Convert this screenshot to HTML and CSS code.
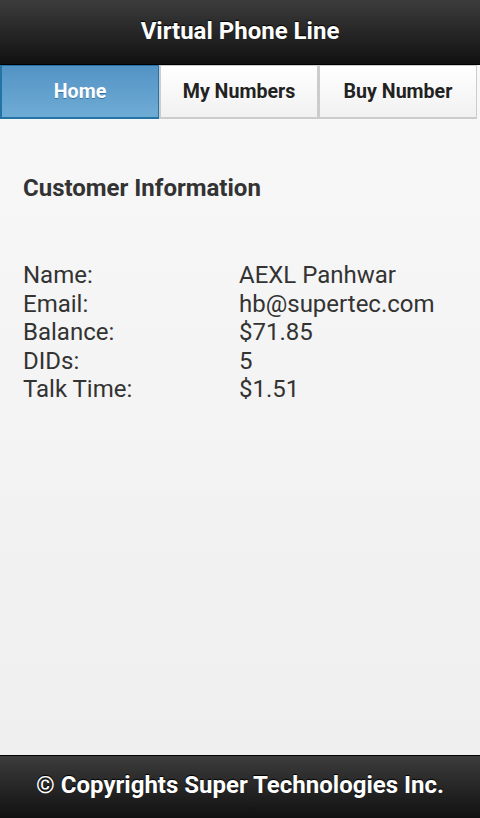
FILE: index.html
```html
<!DOCTYPE html>
<html>
<head>
<meta charset="utf-8">
<link rel="stylesheet" href="styles.css">
</head>
<body>
<div class="page">
  <header class="header"><h1 class="title">Virtual Phone Line</h1></header>
  <nav class="navbar">
    <a class="tab active">Home</a>
    <a class="tab">My Numbers</a>
    <a class="tab">Buy Number</a>
  </nav>
  <main class="content">
    <h3 class="section-title">Customer Information</h3>
    <table class="info">
      <tr><td class="label">Name:</td><td>AEXL Panhwar</td></tr>
      <tr><td class="label">Email:</td><td>hb@supertec.com</td></tr>
      <tr><td class="label">Balance:</td><td>$71.85</td></tr>
      <tr><td class="label">DIDs:</td><td>5</td></tr>
      <tr><td class="label">Talk Time:</td><td>$1.51</td></tr>
    </table>
  </main>
  <footer class="footer"><h4 class="foot-text">© Copyrights Super Technologies Inc.</h4></footer>
</div>
</body>
</html>
```
FILE: styles.css
```css
* { box-sizing: border-box; }
html, body { margin: 0; padding: 0; height: 100%; }
body {
  font-family: Roboto, "Noto Sans", sans-serif;
  color: #333;
}
.page {
  display: flex;
  flex-direction: column;
  height: 818px;
  background: linear-gradient(#f9f9f9, #eeeeee);
}
.header {
  height: 65px;
  background: linear-gradient(#3c3c3c, #111111);
  border-bottom: 1px solid #000;
  display: flex;
  align-items: center;
  justify-content: center;
}
.title {
  margin: 0;
  color: #fff;
  font-size: 24px;
  font-weight: 700;
  text-shadow: 0 -1px 1px #000;
  padding-bottom: 2px;
}
.navbar {
  display: flex;
  width: 477px;
  height: 54px;
}
.tab {
  flex: 1;
  display: flex;
  align-items: center;
  justify-content: center;
  font-size: 19.6px;
  font-weight: 700;
  color: #222;
  text-shadow: 0 1px 0 #fff;
  background: linear-gradient(#ffffff, #f1f1f1);
  border: 1px solid #ccc;
  border-left-width: 2px;
  border-bottom-width: 2px;
}
.tab.active {
  color: #fff;
  text-shadow: 0 1px 0 #3373a5;
  background: linear-gradient(#5393c5, #6facd5);
  border-color: #2373a5;
}
.content {
  flex: 1;
  padding: 0 23px;
}
.section-title {
  margin: 55px 0 0;
  font-size: 24px;
  font-weight: 700;
  line-height: 28px;
}
.info {
  margin-top: 59px;
  width: 100%;
  border-collapse: collapse;
  font-size: 24px;
}
.info td {
  padding: 0;
  line-height: 28.5px;
}
.info .label {
  width: 216px;
}
.footer {
  height: 63px;
  background: linear-gradient(#3c3c3c, #111111);
  border-top: 1px solid #000;
  display: flex;
  align-items: center;
  justify-content: center;
}
.foot-text {
  margin: 0;
  color: #fff;
  font-size: 24px;
  font-weight: 700;
  text-shadow: 0 -1px 1px #000;
  padding-bottom: 4px;
}
```
